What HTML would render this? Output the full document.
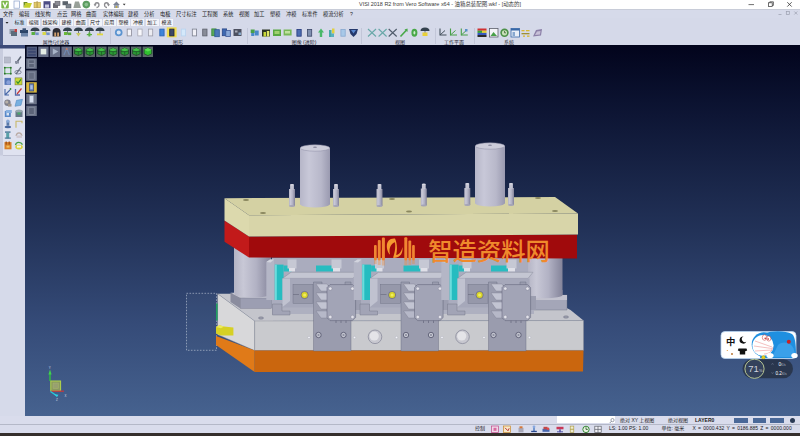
<!DOCTYPE html>
<html lang="zh-CN">
<head>
<meta charset="utf-8">
<title>VISI 2018 R2</title>
<style>
html,body{margin:0;padding:0;}
body{width:800px;height:436px;overflow:hidden;background:#d6daea;font-family:"Liberation Sans","Noto Sans CJK SC",sans-serif;}
#app{position:relative;width:800px;height:436px;overflow:hidden;background:#d6daea;}
.abs{position:absolute;}
#title{left:0;top:0;width:800px;height:9px;background:#ffffff;}
#title .cap{position:absolute;left:359px;top:0;height:9px;line-height:9px;font-size:5.45px;color:#3a3a3a;white-space:nowrap;}
#menu{left:0;top:9px;width:800px;height:9px;background:#d6daea;border-top:0.6px solid #c8ccd8;box-sizing:border-box;}
#menu span{position:absolute;top:0;height:9px;line-height:9px;font-size:5.2px;color:#1a1a22;white-space:nowrap;}
#ribbon{left:0;top:18px;width:800px;height:27px;background:#d5d9e9;}
#tabs span{position:absolute;top:18.6px;height:7.5px;line-height:7.5px;font-size:5px;color:#1a1a22;background:#f3f4fa;text-align:center;white-space:nowrap;}
#tabs span.on{background:#cfe0f4;}
.glabel{position:absolute;top:38.5px;height:6px;line-height:6px;font-size:5px;color:#2a2a33;white-space:nowrap;transform:translateX(-50%);}
.sep{position:absolute;top:28px;width:1px;height:16px;background:#c2c6d8;}
#view{left:25px;top:45px;width:775px;height:371px;background:linear-gradient(to bottom,#02041c 0%,#0b1230 15%,#223258 50%,#354b78 75%,#46628f 100%);}
#leftbar{left:0;top:45px;width:25px;height:371px;background:#d6daea;}
#status{left:0;top:416.2px;width:800px;height:17.2px;background:#d9dcec;}
#taskedge{left:0;top:433.2px;width:800px;height:2.8px;background:#352f2c;}
.st{position:absolute;font-size:5px;line-height:7px;height:7px;color:#1a1a22;white-space:nowrap;}
#overlay{position:absolute;left:0;top:0;width:800px;height:436px;}
</style>
</head>
<body>
<div id="app">
  <div id="title" class="abs"><span class="cap">VISI 2018 R2 from Vero Software x64 - 油箱总装配图.wkf - [动态的]</span></div>
  <div id="menu" class="abs">
<span style="left:3px">文件</span>
<span style="left:19px">编辑</span>
<span style="left:35px">线架构</span>
<span style="left:57px">点云</span>
<span style="left:71px">网格</span>
<span style="left:86px">曲面</span>
<span style="left:103px">实体编辑</span>
<span style="left:128px">建模</span>
<span style="left:144px">分析</span>
<span style="left:160px">电极</span>
<span style="left:176px">尺寸标注</span>
<span style="left:202px">工程图</span>
<span style="left:223px">系统</span>
<span style="left:239px">视图</span>
<span style="left:254px">加工</span>
<span style="left:270px">塑模</span>
<span style="left:286px">冲模</span>
<span style="left:302px">标准件</span>
<span style="left:323px">模流分析</span>
<span style="left:350px">?</span>
</div>
  <div id="ribbon" class="abs"></div>
  <div id="tabs">
<span class="on" style="left:13.0px;width:13px">标准</span>
<span style="left:27.3px;width:13px">编辑</span>
<span style="left:41.6px;width:17px">线架构</span>
<span style="left:59.9px;width:13px">建模</span>
<span style="left:74.2px;width:13px">曲面</span>
<span style="left:88.5px;width:13px">尺寸</span>
<span style="left:102.8px;width:13px">应用</span>
<span style="left:117.1px;width:13px">塑模</span>
<span style="left:131.4px;width:13px">冲模</span>
<span style="left:145.7px;width:13px">加工</span>
<span style="left:160.0px;width:13px">模流</span>
</div>
<span class="glabel" style="left:56px">属性/过滤器</span>
<span class="glabel" style="left:178px">图形</span>
<span class="glabel" style="left:304px">图像 (进阶)</span>
<span class="glabel" style="left:400px">视图</span>
<span class="glabel" style="left:454px">工作平面</span>
<span class="glabel" style="left:509px">系统</span>
<div class="sep" style="left:110px"></div>
<div class="sep" style="left:247px"></div>
<div class="sep" style="left:361px"></div>
<div class="sep" style="left:435px"></div>
<div class="sep" style="left:474px"></div>
  <div id="view" class="abs"></div>
  <div id="leftbar" class="abs"></div>
  <div id="status" class="abs">
    <div class="abs" style="left:0;top:7.4px;width:800px;height:0.8px;background:#b4b8c8"></div>
    <div class="abs" style="left:557px;top:0.3px;width:58px;height:7px;background:#fff"></div>
    <span class="st" style="left:620px;top:0.9px">绝对 XY 上视图</span>
    <span class="st" style="left:668px;top:0.9px">绝对视图</span>
    <span class="st" style="left:695px;top:0.9px;font-weight:bold">LAYER0</span>
    <div class="abs" style="left:734px;top:1.8px;width:13.8px;height:5px;background:#4a6898"></div>
    <div class="abs" style="left:752.5px;top:1.8px;width:13.8px;height:5px;background:#4a6898"></div>
    <div class="abs" style="left:770px;top:1.8px;width:13.8px;height:5px;background:#4a6898"></div>
    <div class="abs" style="left:789.5px;top:1.6px;width:5px;height:5px;border-radius:3px;background:#2a3a55"></div>
    <span class="st" style="left:475px;top:9.3px">控制</span>
    <span class="st" style="left:609px;top:9.3px">LS: 1.00 PS: 1.00</span>
    <span class="st" style="left:661.5px;top:9.3px">单位: 毫米</span>
    <span class="st" style="left:692.5px;top:9.3px;word-spacing:0.9px">X = 0000.432 Y = 0186.885 Z = 0000.000</span>
  </div>
  <div id="taskedge" class="abs"></div>
  <svg id="overlay" viewBox="0 0 800 436" width="800" height="436">
  <defs>
  <linearGradient id="cyl" x1="0" y1="0" x2="1" y2="0">
    <stop offset="0" stop-color="#b6b6c8"/><stop offset="0.3" stop-color="#c8c8d8"/><stop offset="0.7" stop-color="#b8b8ca"/><stop offset="1" stop-color="#9a9ab0"/>
  </linearGradient>
  <linearGradient id="pil" x1="0" y1="0" x2="1" y2="0">
    <stop offset="0" stop-color="#b4b4c4"/><stop offset="0.25" stop-color="#c8c8d6"/><stop offset="0.6" stop-color="#b2b2c4"/><stop offset="1" stop-color="#84849a"/>
  </linearGradient>
  <g id="pin">
    <rect x="-3" y="5" width="6" height="17" fill="url(#pil)"/>
    <ellipse cx="0" cy="22" rx="3" ry="0.9" fill="#a4a4b6"/>
    <rect x="-1.9" y="0.6" width="3.8" height="5" fill="#c4c4d2"/>
    <ellipse cx="0" cy="0.8" rx="1.9" ry="0.7" fill="#dcdce6"/>
  </g>
  <g id="unit">
    <!-- tall post left of cyan -->
    <polygon points="266.3,262 270,259.5 274,259.5 274,300 266.3,300" fill="#b4b6c6"/>
    <polygon points="266.3,262 270,259.5 274,259.5 270.5,262.5" fill="#d2d4de"/>
    <!-- cyan guides -->
    <rect x="274.8" y="264.6" width="8.8" height="35.4" fill="#26bcc0"/>
    <rect x="274.8" y="264.6" width="2" height="35.4" fill="#6cdcdc"/>
    <rect x="283.6" y="265.5" width="8" height="6" fill="#28bcc0"/>
    <rect x="316" y="265.5" width="17" height="6" fill="#28bcc0"/>
    <!-- small top cylinders -->
    <rect x="287.5" y="259.5" width="9" height="9" fill="#c6c8d4"/>
    <rect x="289" y="268" width="6" height="3.5" fill="#e0e0e8"/>
    <rect x="331.5" y="259.5" width="10" height="9" fill="#c6c8d4"/>
    <rect x="333" y="268" width="7" height="3.5" fill="#e0e0e8"/>
    <!-- housing -->
    <polygon points="291,272.3 358,272.3 353,278.4 282.5,278.4" fill="#c4c6d2" stroke="#7c7e90" stroke-width="0.4"/>
    <rect x="282.5" y="278.4" width="72" height="29" fill="#a6a8ba"/>
    <polygon points="282.5,278.4 290,278.4 290,301 282.5,307" fill="#c0c2d0"/>
    <rect x="293" y="284.4" width="20" height="19" fill="#9698aa" stroke="#6c6e82" stroke-width="0.4"/>
    <path d="M293,294.5 H299" stroke="#5c5e72" stroke-width="0.5"/>
    <polygon points="272.5,304 282,304 282,311 290,311 290,315 272.5,315" fill="#a2a4b6" stroke="#6c6e82" stroke-width="0.4"/>
    <circle cx="304.6" cy="295" r="3.6" fill="#d8d428" stroke="#4c4ca0" stroke-width="0.6"/>
    <circle cx="304.6" cy="295" r="1.5" fill="#f0ec60"/>
    <!-- right side parts behind block -->
    <rect x="351" y="296" width="10" height="14" fill="#9c9eb0"/>
    <!-- bracket plate -->
    <polygon points="313.5,282 322,282 322,285.5 345,285.5 345,282 351,282 351,351 313.5,351" fill="#9a9cae" stroke="#62647a" stroke-width="0.4"/>
    <!-- fins -->
    <polygon points="316,284 327,284 332,291 321,291" fill="#c2c4d2" stroke="#6c6e82" stroke-width="0.3"/>
    <polygon points="316,293 327,293 332,300 321,300" fill="#c2c4d2" stroke="#6c6e82" stroke-width="0.3"/>
    <polygon points="316,302 327,302 332,309 321,309" fill="#c2c4d2" stroke="#6c6e82" stroke-width="0.3"/>
    <polygon points="316,311 327,311 332,318 321,318" fill="#b6b8c8" stroke="#6c6e82" stroke-width="0.3"/>
    <!-- square block -->
    <polygon points="330,284.6 352.5,284.6 355.6,287.6 355.6,317.6 352.5,320.6 330,320.6 327,317.6 327,287.6" fill="#a2a4b6" stroke="#5c5e74" stroke-width="0.5"/>
    <circle cx="330.3" cy="288.6" r="1.7" fill="#e2e2ea" stroke="#6c6e82" stroke-width="0.3"/><circle cx="352.5" cy="288.6" r="1.7" fill="#e2e2ea" stroke="#6c6e82" stroke-width="0.3"/>
    <circle cx="330.3" cy="317" r="1.7" fill="#e2e2ea" stroke="#6c6e82" stroke-width="0.3"/><circle cx="352.5" cy="317" r="1.7" fill="#e2e2ea" stroke="#6c6e82" stroke-width="0.3"/>
    <path d="M336,320.6 V323 M341,320.6 V323 M346,320.6 V323" stroke="#5c5e74" stroke-width="0.6"/>
    <!-- screws -->
    <circle cx="318.5" cy="335" r="2.7" fill="#c4c6d0" stroke="#50526a" stroke-width="0.8"/><circle cx="318.5" cy="335" r="1.1" fill="#8c8ea0"/>
    <circle cx="343.5" cy="335" r="2.7" fill="#c4c6d0" stroke="#50526a" stroke-width="0.8"/><circle cx="343.5" cy="335" r="1.1" fill="#8c8ea0"/>
    <circle cx="309" cy="337.5" r="1.2" fill="#f4f4f8" stroke="#8c8ea0" stroke-width="0.3"/><circle cx="354.5" cy="337.5" r="1.2" fill="#f4f4f8" stroke="#8c8ea0" stroke-width="0.3"/>
  </g>
</defs>
<!-- dashed selection box -->
<rect x="186.5" y="293.3" width="30" height="57" fill="#5a7098" fill-opacity="0.12" stroke="#c4ccdc" stroke-width="0.6" stroke-dasharray="1.6 1.4"/>
<!-- pillars behind -->
<rect x="234" y="245" width="37" height="52" fill="url(#pil)"/>
<rect x="527.5" y="250" width="35" height="47" fill="url(#pil)"/>
<!-- lower block -->
<polygon points="217.6,293.7 540,293.7 570.5,310 583.5,320.5 254.7,321" fill="#c4c5cc"/>
<polygon points="217.6,293.7 254.7,321 254.7,350.6 217.6,334.5" fill="#d8d8da" stroke="#8c8e98" stroke-width="0.4"/>
<polygon points="254.7,321 583.5,320.5 583.5,350.4 254.7,350.6" fill="#c9cace" stroke="#8c8e98" stroke-width="0.4"/>
<rect x="216" y="303.5" width="1.6" height="17" fill="#20a060"/>
<!-- orange base -->
<polygon points="216,336 254.7,350.6 254.7,372 216,345" fill="#e07a18"/>
<polygon points="254.7,350.6 583.5,350.4 583,371.5 254.7,372" fill="#ca660e"/>
<!-- raised platform on block -->
<polygon points="272,293.7 540,293.7 566,310 272,310" fill="#b2b4c2"/>
<!-- pillar feet -->
<polygon points="230.5,292.8 271.7,292.8 271.7,298 240.5,298" fill="#c6c6d2"/>
<polygon points="230.5,292.8 240.5,298 240.5,308.5 230.5,302" fill="#8a8c9e"/>
<rect x="240.5" y="298" width="31.2" height="10.5" fill="#9c9eb2" stroke="#6c6e82" stroke-width="0.3"/>
<path d="M234.6,290 L234.6,294 A18.5,3.4 0 0 0 271.7,294 L271.7,290 Z" fill="url(#pil)"/>
<polygon points="531,295 567,295 567,310 531,310" fill="#a4a6b8" stroke="#6c6e82" stroke-width="0.4"/>
<rect x="531" y="295" width="36" height="5" fill="#c2c2ce"/>
<path d="M527.5,290 L527.5,295 A17.5,3.2 0 0 0 562.5,295 L562.5,290 Z" fill="url(#pil)"/>
<!-- small holes on top face -->
<ellipse cx="261" cy="318" rx="2.6" ry="1.2" fill="#9a9cac" stroke="#6c6e82" stroke-width="0.4"/>
<ellipse cx="566" cy="317" rx="2.6" ry="1.2" fill="#9a9cac" stroke="#6c6e82" stroke-width="0.4"/>
<!-- yellow block -->
<polygon points="216,327 219.5,325.3 224,326.5 233.4,327.5 233.4,335.5 221,335.5 216,333.5" fill="#d6d024"/>
<polygon points="216,327 219.5,325.3 224,326.5 221,328.2" fill="#ecea5c"/>
<!-- mechanism background (between) -->
<rect x="272" y="257.5" width="256" height="56" fill="#aaacbe"/>
<rect x="272" y="306" width="262" height="8" fill="#aeb0c0"/>
<use href="#unit"/>
<use href="#unit" transform="translate(87.5,0)"/>
<use href="#unit" transform="translate(175,0)"/>
<!-- big holes -->
<circle cx="375" cy="336.8" r="6.8" fill="#c8c8d0" stroke="#8a8c9c" stroke-width="0.8"/><circle cx="374.2" cy="336" r="4.6" fill="#e4e4e8"/>
<circle cx="462.5" cy="336.8" r="6.8" fill="#c8c8d0" stroke="#8a8c9c" stroke-width="0.8"/><circle cx="461.7" cy="336" r="4.6" fill="#e4e4e8"/>
<!-- red plate -->
<polygon points="224.5,220.6 249,236.5 249,257.5 224.5,241.7" fill="#c21a1a"/>
<polygon points="249,236.5 577,234.5 577,258.5 249,257.5" fill="#a00a0c"/>
<!-- cream plate -->
<polygon points="224.5,198.2 555,197 578,213.5 249,215.3" fill="#d4d1a3"/>
<polygon points="224.5,198.2 249,215.3 249,236.5 224.5,220.6" fill="#dcd9ad"/>
<polygon points="249,215.3 578,213.5 578,234.5 249,236.5" fill="#d8d5a9"/>
<!-- pins -->
<use href="#pin" x="292" y="184"/>
<use href="#pin" x="336" y="184"/>
<use href="#pin" x="379.5" y="184"/>
<use href="#pin" x="423.8" y="183.5"/>
<use href="#pin" x="467.3" y="183"/>
<use href="#pin" x="511" y="183"/>
<!-- big cylinders -->
<path d="M300,148 L300,204 A15,3.5 0 0 0 330,204 L330,148 Z" fill="url(#cyl)"/>
<ellipse cx="315" cy="148" rx="14.8" ry="3.2" fill="#ccccda" stroke="#8c8ca4" stroke-width="0.5"/><ellipse cx="315" cy="147.3" rx="2" ry="0.7" fill="#8c8ca0"/>
<path d="M475,146 L475,203 A15,3.5 0 0 0 505,203 L505,146 Z" fill="url(#cyl)"/>
<ellipse cx="490" cy="146" rx="14.8" ry="3.2" fill="#ccccda" stroke="#8c8ca4" stroke-width="0.5"/><ellipse cx="490" cy="145.3" rx="2" ry="0.7" fill="#8c8ca0"/>
<!-- plate holes -->
<ellipse cx="246" cy="200" rx="3" ry="0.9" fill="#8a875e"/>
<ellipse cx="263" cy="213" rx="3" ry="0.9" fill="#8a875e"/>
<ellipse cx="392" cy="199" rx="3" ry="0.9" fill="#8a875e"/>
<ellipse cx="409" cy="211.5" rx="3" ry="0.9" fill="#8a875e"/>
<ellipse cx="538" cy="198" rx="3" ry="0.9" fill="#8a875e"/>
<ellipse cx="555" cy="211" rx="3" ry="0.9" fill="#8a875e"/>
<!-- watermark -->
<g fill="#f08632">
  <rect x="374" y="245" width="2.7" height="15.5" rx="1"/>
  <rect x="377.8" y="240" width="2.9" height="20.5" rx="1"/>
  <rect x="381.9" y="237.6" width="3" height="22.9" rx="1"/>
  <rect x="404.3" y="237.3" width="3" height="23.2" rx="1"/>
  <rect x="408.4" y="240.4" width="2.8" height="20.1" rx="1"/>
  <rect x="412.1" y="245" width="2.7" height="15.5" rx="1"/>
</g>
<path d="M395,238.6 C389,238 385.6,242.5 387.2,249.5 C387.8,252 389,254 390,254.6 C388.6,249 390.4,243.6 395,242.2 C395.8,248 394.6,253 393,257.8 C399.5,258.6 403.4,253.6 402.4,247 C401.8,251.5 399.2,254.4 396.2,255 C397.4,249.6 397.2,243.6 395,238.6 Z" fill="#f59a30"/>
<g fill="#f08632" fill-opacity="0.35">
  <rect x="374" y="260.5" width="2.7" height="3.5"/><rect x="377.8" y="260.5" width="2.9" height="4.5"/><rect x="381.9" y="260.5" width="3" height="5"/>
  <rect x="404.3" y="260.5" width="3" height="5"/><rect x="408.4" y="260.5" width="2.8" height="4.5"/><rect x="412.1" y="260.5" width="2.7" height="3.5"/>
</g>
<text x="428.3" y="260" font-family="'Liberation Sans','Noto Sans CJK SC',sans-serif" font-size="24.3" font-weight="500" fill="#f08a2c">智造资料网</text>

<g id="qa">
<rect x="1.3" y="0.8" width="7.5" height="7.6" fill="#7cb84a" rx="1"/>
<path d="M3,2.4 L5,7 L7.2,2.4" stroke="#fff" stroke-width="1.3" fill="none"/>
<rect x="14.0" y="1.0" width="5.5" height="7.2" fill="#fbfbff" stroke="#8aa0c8" stroke-width="0.7"/>
<polygon points="23.6,7.8 25.5,3 32,3 30,7.8" fill="#c6d02e"/>
<polygon points="23.6,7.8 23.6,2 27,2 27.8,3 25.5,3" fill="#6c8c22"/>
<rect x="34.0" y="2.2" width="6.5" height="5.6" fill="#e4cc6c" stroke="#a89040" stroke-width="0.5"/>
<rect x="36.5" y="1.2" width="1.2" height="6.8" fill="#b8a050" />
<rect x="43.5" y="1.2" width="7.0" height="7.0" fill="#4c4c84" />
<rect x="45.0" y="4.5" width="4.0" height="3.2" fill="#c8c8e0" />
<rect x="53.0" y="3.2" width="5.0" height="4.8" fill="#6c6c74" />
<rect x="55.0" y="1.2" width="5.0" height="4.5" fill="#8c8c94" stroke="#55555c" stroke-width="0.5"/>
<rect x="62.5" y="1.2" width="5.5" height="4.0" fill="#5c646c" />
<rect x="66.0" y="4.0" width="5.0" height="4.0" fill="#7c848c" stroke="#4c545c" stroke-width="0.5"/>
<polygon points="75,1.5 79,1.5 81,8 73.4,8" fill="#98a098"/>
<circle cx="86.3" cy="4.6" r="3.8" fill="#5c9c60" />
<circle cx="86.3" cy="4.6" r="1.8" fill="#8cc090" />
<path d="M95,5 C95,2 99,2 99,5 C99,7 97,7.5 96.5,7.5" stroke="#8c8c90" stroke-width="1.3" fill="none"/><polygon points="93.6,4.2 96.6,4.2 95,6.4" fill="#8c8c90"/>
<path d="M108.5,5 C108.5,2 104.5,2 104.5,5 C104.5,7 106.5,7.5 107,7.5" stroke="#8c8c90" stroke-width="1.3" fill="none"/><polygon points="107,4.2 110,4.2 108.5,6.4" fill="#8c8c90"/>
<polygon points="113,5 116.4,1.5 119.8,5" fill="#7c8494"/>
<rect x="114.0" y="5.0" width="4.8" height="3.0" fill="#9ca4b4" />
<rect x="115.8" y="6.0" width="1.4" height="2.0" fill="#c8b040" />
<polygon points="122.8,3.8 125.6,3.8 124.2,5.4" fill="#333"/>
<path d="M748.5,4.6 H754" stroke="#333" stroke-width="0.7"/>
<rect x="768.6" y="2.8" width="3.6" height="3.6" fill="none" stroke="#333" stroke-width="0.7"/><path d="M769.8,2.8 V1.8 H773.4 V5.4 H772.2" fill="none" stroke="#333" stroke-width="0.7"/>
<path d="M787.3,2.2 L791.7,6.6 M791.7,2.2 L787.3,6.6" stroke="#333" stroke-width="0.8"/>
<path d="M778.5,14.5 H781.5" stroke="#9a9eae" stroke-width="0.7"/><rect x="786.3" y="11.5" width="3" height="3" fill="none" stroke="#9a9eae" stroke-width="0.7"/><path d="M794.3,11.5 L797.3,14.5 M797.3,11.5 L794.3,14.5" stroke="#9a9eae" stroke-width="0.7"/>
</g>
<g id="rib">
<rect x="0" y="18" width="3" height="31" fill="#4a5a88"/>
<polygon points="5.5,22 8.5,22 7,23.8" fill="#222"/>
<rect x="9.5" y="29.0" width="5.0" height="5.0" fill="#8c98a8" />
<rect x="11.0" y="31.0" width="6.0" height="5.0" fill="#5c6c7c" />
<rect x="14.5" y="29.0" width="2.5" height="3.0" fill="#c04040" />
<rect x="20.0" y="30.0" width="8.0" height="3.0" fill="#2c4468" />
<rect x="21.0" y="33.0" width="7.0" height="3.5" fill="#6c84a8" />
<rect x="22.5" y="28.3" width="3.5" height="2.4" fill="#3c5478" />
<path d="M30.5,31.0 A4.5,3.6 0 0 1 39.5,31.0 Z" fill="#34424e"/>
<rect x="34.6" y="31.0" width="0.8" height="3.5" fill="#55606a" />
<rect x="31.5" y="32.0" width="3.4" height="3.0" fill="#58b040" />
<rect x="35.5" y="32.5" width="3.2" height="2.6" fill="#7090c8" />
<path d="M41.5,31.0 A4.5,3.6 0 0 1 50.5,31.0 Z" fill="#34424e"/>
<rect x="45.6" y="31.0" width="0.8" height="3.5" fill="#55606a" />
<rect x="42.5" y="32.0" width="3.4" height="3.0" fill="#d8d848" />
<rect x="46.5" y="32.5" width="3.2" height="2.6" fill="#7090c8" />
<path d="M52.6,36.5 V32 A4,4 0 0 1 60.6,32 V36.5 Z" fill="#2c2c34"/>
<rect x="54.3" y="32.5" width="1.8" height="4.0" fill="#d0a070" />
<rect x="57.2" y="32.5" width="1.8" height="4.0" fill="#d0a070" />
<path d="M63.0,31.0 A4.5,3.6 0 0 1 72.0,31.0 Z" fill="#34424e"/>
<rect x="67.1" y="31.0" width="0.8" height="3.5" fill="#55606a" />
<rect x="64.0" y="32.0" width="3.4" height="3.0" fill="#68b838" />
<rect x="68.0" y="32.5" width="3.2" height="2.6" fill="#58a838" />
<path d="M73.9,31.0 A4.5,3.6 0 0 1 82.9,31.0 Z" fill="#34424e"/>
<rect x="78.0" y="31.0" width="0.8" height="3.5" fill="#55606a" />
<polygon points="76,33 80.8,33 78.4,36.5" fill="#c8c860"/>
<path d="M84.9,31.0 A4.5,3.6 0 0 1 93.9,31.0 Z" fill="#34424e"/>
<rect x="89.0" y="31.0" width="0.8" height="3.5" fill="#55606a" />
<rect x="88.4" y="32.5" width="2.0" height="4.0" fill="#58b040" />
<rect x="86.8" y="34.0" width="5.2" height="1.2" fill="#58b040" />
<path d="M95.5,31.0 A4.5,3.6 0 0 1 104.5,31.0 Z" fill="#34424e"/>
<rect x="99.6" y="31.0" width="0.8" height="3.5" fill="#55606a" />
<rect x="97.0" y="33.5" width="6.0" height="1.8" fill="#e0d840" />
<circle cx="118.7" cy="32.5" r="3.8" fill="#5c94d0" />
<circle cx="118.7" cy="32.5" r="2.0" fill="#d8e4f4" />
<rect x="127.2" y="29.1" width="4.3" height="6.8" fill="#f4f4fa" stroke="#8c8c98" stroke-width="0.8"/>
<rect x="137.8" y="29.1" width="4.3" height="6.8" fill="#f8f8fc" stroke="#a8a8b4" stroke-width="0.8"/>
<rect x="148.4" y="29.1" width="4.3" height="6.8" fill="#ececf2" stroke="#9c9ca8" stroke-width="0.8"/>
<rect x="159.8" y="29.1" width="4.3" height="6.8" fill="#3c84d8" stroke="#2860b0" stroke-width="0.8"/>
<rect x="166.8" y="27.3" width="9.8" height="10.0" fill="#f0dc50" />
<rect x="169.7" y="29.1" width="4.3" height="6.8" fill="#3c4868" stroke="#1c2438" stroke-width="0.8"/>
<rect x="181.3" y="29.1" width="4.3" height="6.8" fill="#d4e8fa" stroke="#b8d4f0" stroke-width="0.8"/>
<rect x="192.3" y="29.1" width="4.3" height="6.8" fill="#f0f0f6" stroke="#7c8090" stroke-width="0.8"/>
<rect x="202.7" y="29.1" width="4.3" height="6.8" fill="#888c98" stroke="#5c606c" stroke-width="0.8"/>
<rect x="211.8" y="28.9" width="4.3" height="6.8" fill="#58a858" stroke="#388838" stroke-width="0.8"/>
<rect x="214.8" y="29.7" width="4.5" height="7.0" fill="#4c78b8" stroke="#2c5898" stroke-width="0.8"/>
<rect x="222.3" y="28.9" width="4.3" height="6.8" fill="#3c68b0" stroke="#2c4888" stroke-width="0.8"/>
<rect x="225.8" y="30.5" width="4.5" height="6.0" fill="#88a8d8" stroke="#3c5898" stroke-width="0.8"/>
<rect x="233.5" y="29.0" width="8.0" height="7.0" fill="#4c5060" />
<rect x="235.0" y="30.5" width="2.5" height="2.0" fill="#a8acb8" />
<rect x="238.5" y="32.5" width="2.5" height="2.5" fill="#88a8c8" />
<rect x="250.7" y="29.5" width="4.0" height="3.5" fill="#48a048" />
<rect x="254.7" y="30.5" width="4.0" height="5.0" fill="#4888c8" />
<rect x="251.2" y="33.0" width="3.0" height="3.0" fill="#4888c8" />
<rect x="262.0" y="29.5" width="8.0" height="7.0" fill="#2c3424" />
<rect x="263.5" y="32.0" width="2.5" height="4.5" fill="#c8d838" />
<rect x="266.8" y="31.0" width="2.5" height="5.5" fill="#e0e868" />
<rect x="273.0" y="29.5" width="8.0" height="6.5" fill="#58a840" />
<rect x="274.5" y="31.0" width="5.0" height="3.0" fill="#a0d070" />
<rect x="283.6" y="29.5" width="8.0" height="6.0" fill="#78b858" />
<rect x="285.0" y="31.0" width="5.0" height="2.5" fill="#c0e0a0" />
<rect x="296.9" y="29.4" width="4.3" height="6.8" fill="#4c6cb0" stroke="#24387c" stroke-width="0.8"/>
<rect x="307.4" y="29.4" width="4.3" height="6.8" fill="#8090b0" stroke="#3c4868" stroke-width="0.8"/>
<polygon points="321,28.5 324,32.5 322.2,32.5 322.2,37 319.8,37 319.8,32.5 318,32.5" fill="#48b868"/>
<rect x="329.0" y="30.0" width="2.5" height="7.0" fill="#48a8a8" />
<rect x="332.0" y="28.5" width="2.5" height="5.0" fill="#e0d040" />
<rect x="331.0" y="33.5" width="3.0" height="3.5" fill="#58b0c0" />
<rect x="340.9" y="29.4" width="4.3" height="6.8" fill="#a8c8e8" stroke="#88a8d0" stroke-width="0.8"/>
<polygon points="349,29 358,29 356.5,34 353.5,37 350.5,34" fill="#24386c"/>
<polygon points="351,30 356,30 353.5,33.5" fill="#5888d0"/>
<path d="M368,29 L376,36.5 M376,29 L368,36.5" stroke="#68a8a8" stroke-width="1.1"/>
<path d="M378.6,29 L386.6,36.5 M386.6,29 L378.6,36.5" stroke="#68a8a8" stroke-width="1.1"/>
<path d="M388.7,29 L396.7,36.5 M396.7,29 L388.7,36.5" stroke="#505c6c" stroke-width="1.1"/>
<path d="M400.5,36.5 L407,29.5" stroke="#48a848" stroke-width="1.6"/><polygon points="407.5,28.5 407.5,32 404.5,29.5" fill="#48a848"/>
<ellipse cx="414.4" cy="32.8" rx="3" ry="4" fill="#48a848"/><ellipse cx="414.4" cy="32.8" rx="1" ry="1.8" fill="#d0ecd0"/>
<path d="M420.5,31.0 A4.5,3.6 0 0 1 429.5,31.0 Z" fill="#34424e"/>
<rect x="424.6" y="31.0" width="0.8" height="3.5" fill="#55606a" />
<rect x="422.5" y="32.5" width="5.0" height="3.5" fill="#e8d038" />
<path d="M440.0,28.5 V35 H446.5" stroke="#44505c" stroke-width="1.1" fill="none"/><path d="M440.0,35 L445.0,30.5" stroke="#44505c" stroke-width="1"/>
<path d="M450.5,28.5 V35 H457" stroke="#48a048" stroke-width="1.1" fill="none"/><path d="M450.5,35 L455.5,30.5" stroke="#48a048" stroke-width="1"/>
<path d="M461.3,28.5 V35 H467.8" stroke="#48a048" stroke-width="1.1" fill="none"/><path d="M461.3,35 L466.3,30.5" stroke="#48a048" stroke-width="1"/>
<rect x="465.0" y="29.0" width="2.5" height="2.5" fill="#5890c8" />
<rect x="477.5" y="28.5" width="9.0" height="2.2" fill="#d03030" />
<rect x="477.5" y="30.7" width="4.5" height="2.2" fill="#38a038" />
<rect x="482.0" y="30.7" width="4.5" height="2.2" fill="#e0d030" />
<rect x="477.5" y="32.9" width="9.0" height="2.2" fill="#3858c0" />
<rect x="477.5" y="35.1" width="9.0" height="1.8" fill="#181818" />
<rect x="489.5" y="28.5" width="8.5" height="8.5" fill="#f4f4f8" stroke="#5c606c" stroke-width="0.8"/>
<polygon points="490.5,36 493.5,32 497,36" fill="#48a048"/>
<circle cx="504.5" cy="32.8" r="4.2" fill="#4c9048" />
<circle cx="504.5" cy="32.8" r="2.6" fill="#c8e0b8" />
<path d="M504.5,31 V32.8 H506" stroke="#2c5028" stroke-width="0.7" fill="none"/>
<rect x="511.0" y="28.5" width="8.5" height="8.5" fill="#e8eef8" stroke="#3868a8" stroke-width="0.8"/>
<rect x="511.0" y="28.5" width="8.5" height="2.0" fill="#3868a8" />
<rect x="512.5" y="32.0" width="2.5" height="4.0" fill="#88a8d0" />
<rect x="521.5" y="30.0" width="3.0" height="1.3" fill="#d8b830" />
<rect x="526.0" y="30.0" width="3.5" height="1.3" fill="#d8b830" />
<rect x="521.5" y="33.0" width="8.0" height="1.3" fill="#a09030" />
<rect x="523.0" y="35.5" width="2.0" height="1.3" fill="#d8b830" />
<rect x="527.0" y="35.5" width="2.5" height="1.3" fill="#d8b830" />
<polygon points="533,36.5 536,30 542,29 541,35.5" fill="#8c80a8"/>
<polygon points="535,35 537,31.5 540.5,31 540,34.5" fill="#c8c0d8"/>
</g>
<g id="vt">
<rect x="26.6" y="46.6" width="10.4" height="10.4" fill="#525c7c" />
<rect x="28.1" y="48.0" width="7.6" height="1.8" fill="#3c4870" />
<rect x="28.1" y="51.0" width="7.6" height="1.8" fill="#3c4870" />
<rect x="28.1" y="54.0" width="7.6" height="1.8" fill="#3c4870" />
<rect x="38.2" y="46.6" width="10.4" height="10.4" fill="#687088" />
<rect x="40.7" y="48.8" width="5.6" height="5.6" fill="#e4ece4" />
<rect x="49.8" y="46.6" width="10.4" height="10.4" fill="#687088" />
<polygon points="52.800000000000004,48.5 58.300000000000004,51.6 52.800000000000004,54.7" fill="#a8b4c8"/>
<rect x="61.4" y="46.6" width="10.4" height="10.4" fill="#687088" />
<path d="M63.900000000000006,55 L66.7,48.5 L69.4,55" stroke="#7088b0" stroke-width="1.2" fill="none"/>
<rect x="65.9" y="48.0" width="1.6" height="2.0" fill="#c07860" />
<rect x="73.0" y="46.6" width="10.4" height="10.4" fill="#5a6a68" />
<polygon points="78.3,48 82.1,49.8 82.1,53.8 78.3,55.6 74.5,53.8 74.5,49.8" fill="#2a9a34" stroke="#1c4424" stroke-width="0.7"/>
<polygon points="78.3,51.6 82.1,49.8 78.3,48 74.5,49.8" fill="#44c048"/>
<path d="M74.5,51.6 H82.1 M78.3,51.6 V55.6" stroke="#1c4424" stroke-width="0.6"/>
<rect x="84.6" y="46.6" width="10.4" height="10.4" fill="#5a6a68" />
<polygon points="89.89999999999999,48 93.69999999999999,49.8 93.69999999999999,53.8 89.89999999999999,55.6 86.1,53.8 86.1,49.8" fill="#2a9a34" stroke="#1c4424" stroke-width="0.7"/>
<polygon points="89.89999999999999,51.6 93.69999999999999,49.8 89.89999999999999,48 86.1,49.8" fill="#44c048"/>
<path d="M86.1,51.6 H93.69999999999999 M89.89999999999999,51.6 V55.6" stroke="#1c4424" stroke-width="0.6"/>
<rect x="96.2" y="46.6" width="10.4" height="10.4" fill="#5a6a68" />
<polygon points="101.49999999999999,48 105.29999999999998,49.8 105.29999999999998,53.8 101.49999999999999,55.6 97.69999999999999,53.8 97.69999999999999,49.8" fill="#2a9a34" stroke="#1c4424" stroke-width="0.7"/>
<polygon points="101.49999999999999,51.6 105.29999999999998,49.8 101.49999999999999,48 97.69999999999999,49.8" fill="#44c048"/>
<path d="M97.69999999999999,51.6 H105.29999999999998 M101.49999999999999,51.6 V55.6" stroke="#1c4424" stroke-width="0.6"/>
<rect x="107.8" y="46.6" width="10.4" height="10.4" fill="#5a6a68" />
<polygon points="113.09999999999998,48 116.89999999999998,49.8 116.89999999999998,53.8 113.09999999999998,55.6 109.29999999999998,53.8 109.29999999999998,49.8" fill="#2a9a34" stroke="#1c4424" stroke-width="0.7"/>
<polygon points="113.09999999999998,51.6 116.89999999999998,49.8 113.09999999999998,48 109.29999999999998,49.8" fill="#44c048"/>
<path d="M109.29999999999998,51.6 H116.89999999999998 M113.09999999999998,51.6 V55.6" stroke="#1c4424" stroke-width="0.6"/>
<rect x="119.4" y="46.6" width="10.4" height="10.4" fill="#5a6a68" />
<polygon points="124.69999999999997,48 128.49999999999997,49.8 128.49999999999997,53.8 124.69999999999997,55.6 120.89999999999998,53.8 120.89999999999998,49.8" fill="#2a9a34" stroke="#1c4424" stroke-width="0.7"/>
<polygon points="124.69999999999997,51.6 128.49999999999997,49.8 124.69999999999997,48 120.89999999999998,49.8" fill="#44c048"/>
<path d="M120.89999999999998,51.6 H128.49999999999997 M124.69999999999997,51.6 V55.6" stroke="#1c4424" stroke-width="0.6"/>
<rect x="131.0" y="46.6" width="10.4" height="10.4" fill="#5a6a68" />
<polygon points="136.29999999999998,48 140.1,49.8 140.1,53.8 136.29999999999998,55.6 132.49999999999997,53.8 132.49999999999997,49.8" fill="#2a9a34" stroke="#1c4424" stroke-width="0.7"/>
<polygon points="136.29999999999998,51.6 140.1,49.8 136.29999999999998,48 132.49999999999997,49.8" fill="#44c048"/>
<path d="M132.49999999999997,51.6 H140.1 M136.29999999999998,51.6 V55.6" stroke="#1c4424" stroke-width="0.6"/>
<rect x="142.6" y="46.6" width="10.4" height="10.4" fill="#5a6a68" />
<polygon points="147.89999999999998,48 151.7,49.8 151.7,53.8 147.89999999999998,55.6 144.09999999999997,53.8 144.09999999999997,49.8" fill="#30c030" stroke="#1c4424" stroke-width="0.7"/>
<polygon points="147.89999999999998,51.6 151.7,49.8 147.89999999999998,48 144.09999999999997,49.8" fill="#58e050"/>
<rect x="26.2" y="58.4" width="10.6" height="10.4" fill="#6c7488" />
<rect x="28.8" y="59.9" width="5.4" height="7.4" fill="#5c6478" stroke="#8c94a8" stroke-width="0.6"/>
<rect x="28.8" y="63.1" width="5.4" height="0.8" fill="#8c94a8" />
<rect x="26.2" y="70.4" width="10.6" height="10.4" fill="#6c7488" />
<rect x="28.8" y="72.2" width="5.4" height="7.0" fill="#646c80" stroke="#8c94a8" stroke-width="0.6"/>
<rect x="26.2" y="82.2" width="10.6" height="10.4" fill="#d8b840" />
<rect x="29.3" y="83.8" width="4.4" height="7.2" fill="#6880b8" stroke="#38486c" stroke-width="0.6"/>
<rect x="30.3" y="85.2" width="2.4" height="4.0" fill="#a8c0e8" />
<rect x="26.2" y="94.0" width="10.6" height="10.4" fill="#6c7488" />
<rect x="29.3" y="95.6" width="4.4" height="7.2" fill="#d8e0f0" stroke="#8c94a8" stroke-width="0.6"/>
<rect x="26.2" y="105.6" width="10.6" height="10.4" fill="#6c7488" />
<rect x="28.8" y="107.4" width="5.4" height="7.0" fill="#5c6478" stroke="#8c94a8" stroke-width="0.6"/>
</g>
<g id="lt">
<rect x="3.0" y="48.5" width="22.0" height="107.0" fill="#dfe2f0" />
<rect x="0.0" y="45.0" width="25.0" height="3.5" fill="#3c4a78" />
<rect x="0.0" y="48.5" width="3.0" height="107.0" fill="#c8ccde" />
<path d="M3,155.5 H25" stroke="#b4b8ca" stroke-width="0.7"/>
<rect x="4.5" y="57.0" width="6.0" height="6.0" fill="#b8bccc" stroke="#9ca0b0" stroke-width="0.5"/>
<path d="M16,63.5 L21,56.5" stroke="#5c6474" stroke-width="1.4"/>
<rect x="15.0" y="61.0" width="4.0" height="2.5" fill="#888ea0" />
<rect x="4.8" y="67.7" width="6" height="6" fill="none" stroke="#48a048" stroke-width="1"/>
<circle cx="4.8" cy="67.7" r="0.9" fill="#2c6c2c" />
<circle cx="10.8" cy="67.7" r="0.9" fill="#2c6c2c" />
<circle cx="4.8" cy="73.7" r="0.9" fill="#2c6c2c" />
<circle cx="10.8" cy="73.7" r="0.9" fill="#2c6c2c" />
<path d="M16,74.2 L21,67.2" stroke="#6c7484" stroke-width="1.4"/>
<ellipse cx="18" cy="72.2" rx="3.2" ry="1.8" fill="none" stroke="#5c6478" stroke-width="0.7"/>
<rect x="4.5" y="77.9" width="6.5" height="7.0" fill="#5878b8" />
<circle cx="8.5" cy="82.4" r="2.2" fill="#88a0d8" />
<rect x="15.0" y="77.9" width="7.0" height="7.0" fill="#c8d838" stroke="#687030" stroke-width="0.5"/>
<path d="M16.5,81.4 L18,83.4 L21,79.4" stroke="#2c8c2c" stroke-width="1.1" fill="none"/>
<path d="M5,95 L10,90 M5,89 V95 H9" stroke="#4868a8" stroke-width="1.1" fill="none"/>
<circle cx="10.5" cy="89.0" r="0.9" fill="#2c8c2c" />
<path d="M15.5,89 V95 H20" stroke="#5868a8" stroke-width="1.3" fill="none"/><path d="M17,94 L21.5,88.5" stroke="#c83838" stroke-width="1.2"/>
<circle cx="7.5" cy="102.8" r="3.2" fill="#80808c" />
<circle cx="6.8" cy="102.0" r="1.6" fill="#b8b0a8" />
<rect x="8.0" y="103.8" width="3.5" height="2.8" fill="#a09488" />
<polygon points="15,106.3 16.5,100.3 22.5,99.3 21,105.3" fill="#78b0e0" stroke="#4880b8" stroke-width="0.5"/>
<rect x="4.8" y="111.0" width="6.0" height="6.0" fill="#5888c8" />
<rect x="5.8" y="110.0" width="6.0" height="3.0" fill="#88b0e0" />
<rect x="6.5" y="113.0" width="2.5" height="2.5" fill="#d8e4f4" />
<rect x="15.5" y="111.0" width="7.0" height="6.0" fill="#687888" />
<ellipse cx="19" cy="111.0" rx="3.5" ry="1.5" fill="#98a8b0"/>
<rect x="17.5" y="112.5" width="3.0" height="2.0" fill="#48a868" />
<rect x="6.5" y="120.7" width="2.8" height="5.0" fill="#5878a8" />
<ellipse cx="7.9" cy="127.0" rx="3.2" ry="1.2" fill="#4868a0"/>
<circle cx="7.9" cy="121.2" r="1.6" fill="#88a8d8" />
<path d="M16,127.7 V121.2 H22 V123.2" stroke="#c8b868" stroke-width="1.1" fill="none"/>
<rect x="5.0" y="131.4" width="5.5" height="1.4" fill="#487898" />
<rect x="6.2" y="132.9" width="3.0" height="5.5" fill="#58a0a8" />
<rect x="4.8" y="137.5" width="6.0" height="1.2" fill="#487898" />
<path d="M16,135.9 C17,131.9 21,131.9 22,135.9" stroke="#b8a8a0" stroke-width="1.2" fill="none"/>
<rect x="16.5" y="135.4" width="5.5" height="2.5" fill="#d0c8d0" />
<rect x="4.5" y="142.1" width="7.0" height="7.2" fill="#d88028" />
<rect x="5.5" y="141.6" width="1.5" height="3.0" fill="#a85818" />
<rect x="8.5" y="141.6" width="1.5" height="3.0" fill="#a85818" />
<rect x="6.5" y="145.6" width="3.0" height="2.0" fill="#f0c060" />
<ellipse cx="19" cy="147.1" rx="3.8" ry="2.4" fill="#d8d040"/>
<path d="M15.5,145.1 C16,141.6 21,141.6 22.5,144.6" stroke="#48a048" stroke-width="1.3" fill="none"/>
<rect x="17.0" y="145.6" width="4.0" height="2.0" fill="#f4f4e8" />
</g>
<g id="sti" transform="translate(0,0.8)">
<rect x="491.5" y="425.2" width="7.0" height="6.6" fill="#f0d8e8" stroke="#c04888" stroke-width="0.7"/>
<rect x="493.5" y="427.0" width="3.0" height="3.0" fill="#d868a0" />
<rect x="503.5" y="425.2" width="7.0" height="6.6" fill="#f8e8c8" stroke="#c88828" stroke-width="0.7"/>
<path d="M505,427 L508,430 L509.2,427.5" stroke="#c03838" stroke-width="1" fill="none"/>
<rect x="518.5" y="427.0" width="5.0" height="4.5" fill="#a8a8b8" />
<rect x="519.5" y="425.5" width="3.0" height="2.0" fill="#d87838" />
<rect x="533.3" y="425.5" width="1.4" height="5.0" fill="#4878c0" />
<rect x="531.2" y="430.0" width="5.6" height="1.3" fill="#28488c" />
<circle cx="534.0" cy="426.0" r="1.4" fill="#88a8e0" />
<rect x="542.5" y="428.0" width="7.0" height="3.0" fill="#4868b0" />
<rect x="543.5" y="426.0" width="4.0" height="2.5" fill="#c04848" />
<circle cx="548.0" cy="428.0" r="1.3" fill="#e04848" />
<rect x="556.5" y="426.0" width="7.0" height="2.5" fill="#c83858" />
<rect x="559.2" y="428.5" width="1.6" height="3.0" fill="#5858a8" />
<rect x="557.0" y="430.5" width="6.0" height="1.0" fill="#5858a8" />
<rect x="570.2" y="425.3" width="3.6" height="6.4" fill="#f0ecd0" stroke="#a89838" stroke-width="0.6"/>
<rect x="570.2" y="428.0" width="3.6" height="0.8" fill="#a89838" />
<circle cx="586" cy="428.6" r="3.2" fill="#e8f4e0" stroke="#388838" stroke-width="1"/>
<path d="M586,426.5 V428.6 H587.8" stroke="#1c4c1c" stroke-width="0.8" fill="none"/>
<rect x="594.8" y="425.4" width="6.4" height="6.4" fill="#f0f0f6" stroke="#5c6068" stroke-width="0.7"/><path d="M598,425.4 V431.8 M594.8,428.6 H601.2" stroke="#5c6068" stroke-width="0.7"/>
<circle cx="612.5" cy="419.3" r="1.6" fill="none" stroke="#5c6478" stroke-width="0.6"/><path d="M611.3,420.5 L609.8,422.2" stroke="#5c6478" stroke-width="0.7"/>
</g>
<!-- triad -->
<g id="triad">
  <path d="M50,381 V372" stroke="#30c040" stroke-width="1.4"/>
  <polygon points="50,369.5 51.6,374.5 48.4,374.5" fill="#40d050"/>
  <rect x="50.8" y="381" width="9.8" height="9.8" fill="#8a9860" stroke="#b4d648" stroke-width="1"/>
  <rect x="53" y="383" width="5.4" height="5.6" fill="#98a070" stroke="#a8b868" stroke-width="0.5"/>
  <path d="M51,391.2 H64" stroke="#c03840" stroke-width="1.3"/>
  <path d="M50.5,391.5 L57,396" stroke="#28c8d8" stroke-width="1.4"/>
  <polygon points="54,394.2 58.5,394.8 57,397" fill="#30d0e0"/>
  <text x="48.8" y="369" font-family="'Liberation Sans',sans-serif" font-size="3" fill="#d8dce8">Y</text>
  <text x="64.5" y="396.5" font-family="'Liberation Sans',sans-serif" font-size="3" fill="#d8dce8">X</text>
  <text x="56" y="400.5" font-family="'Liberation Sans',sans-serif" font-size="3" fill="#d8dce8">Z</text>
</g>
<!-- ime widget -->
<g id="ime">
  <rect x="721" y="331.5" width="75" height="27" rx="4" ry="4" fill="#ffffff" stroke="#b8d4f0" stroke-width="0.8"/>
  <path d="M764,334 C772,330 786,331 792,334 C796,337 796,350 796,354 L797,358 L760,358 Z" fill="#1f8fe0"/>
  <path d="M778,345 C784,340 792,343 794,350 L796,357 L772,357 Z" fill="#3aa0ea"/>
  <circle cx="764" cy="344.5" r="12.3" fill="#1f8fe0"/>
  <circle cx="763" cy="345.5" r="10.6" fill="#ffffff"/>
  <ellipse cx="764.5" cy="337.5" rx="2.2" ry="2.8" fill="#fff" stroke="#c03030" stroke-width="0.5"/>
  <ellipse cx="768.8" cy="338.5" rx="2" ry="2.6" fill="#fff" stroke="#c03030" stroke-width="0.5"/>
  <circle cx="765.2" cy="338.2" r="0.8" fill="#c02020"/>
  <circle cx="768.2" cy="339" r="0.8" fill="#c02020"/>
  <path d="M755,341 L772,347 M754,346 L772,348.5 M755,351 L772,350 M764,354 C768,354 772,352 773,347" stroke="#e06060" stroke-width="0.4" fill="none"/>
  <circle cx="788.8" cy="341.8" r="2" fill="#d02020"/>
  <ellipse cx="770" cy="355.5" rx="3.6" ry="2.6" fill="#ffffff"/>
  <ellipse cx="794.5" cy="355.6" rx="3.2" ry="2.6" fill="#ffffff"/>
  <circle cx="763.4" cy="357.4" r="1.8" fill="#e8d020" stroke="#a89010" stroke-width="0.4"/>
  <text x="726" y="344.6" font-family="'Liberation Sans','Noto Sans CJK SC',sans-serif" font-size="9.4" font-weight="700" fill="#111">中</text>
  <path d="M743.5,336.4 A3.6,3.6 0 1 0 746.3,341.8 A2.9,2.9 0 0 1 743.5,336.4 Z" fill="#111"/>
  <path d="M738.5,348.5 H746.5 L747.2,350.6 L745.2,351.2 V354.6 H739.8 V351.2 L737.8,350.6 Z" fill="#111"/>
  <circle cx="727.3" cy="350.5" r="0.6" fill="#e09030"/><circle cx="732" cy="354" r="0.9" fill="#b06820"/>
</g>
<g id="net">
  <rect x="742.5" y="359.2" width="50.5" height="19" rx="9.5" ry="9.5" fill="#28344a" fill-opacity="0.92"/>
  <circle cx="754.5" cy="368.8" r="9.6" fill="#34425c" stroke="#c4d49a" stroke-width="0.9"/>
  <text x="748.2" y="372.2" font-family="'Liberation Sans',sans-serif" font-size="9.6" fill="#ccd2de">71</text>
  <text x="759" y="372.2" font-family="'Liberation Sans',sans-serif" font-size="4" fill="#c8ccd8">%</text>
  <text x="778.5" y="365.6" font-family="'Liberation Sans',sans-serif" font-size="4.6" fill="#ffffff">0<tspan font-size="3.2" fill="#b0b8c8">K/s</tspan></text>
  <text x="775.5" y="374.6" font-family="'Liberation Sans',sans-serif" font-size="4.6" fill="#ffffff">0.2<tspan font-size="3.2" fill="#b0b8c8">K/s</tspan></text>
  <path d="M771.5,364.8 L772.5,363.2 L773.5,364.8" fill="none" stroke="#6c7890" stroke-width="0.5"/>
  <path d="M771.5,372.2 L772.5,373.8 L773.5,372.2" fill="none" stroke="#6c7890" stroke-width="0.5"/>
</g>

  </svg>
</div>
</body>
</html>
